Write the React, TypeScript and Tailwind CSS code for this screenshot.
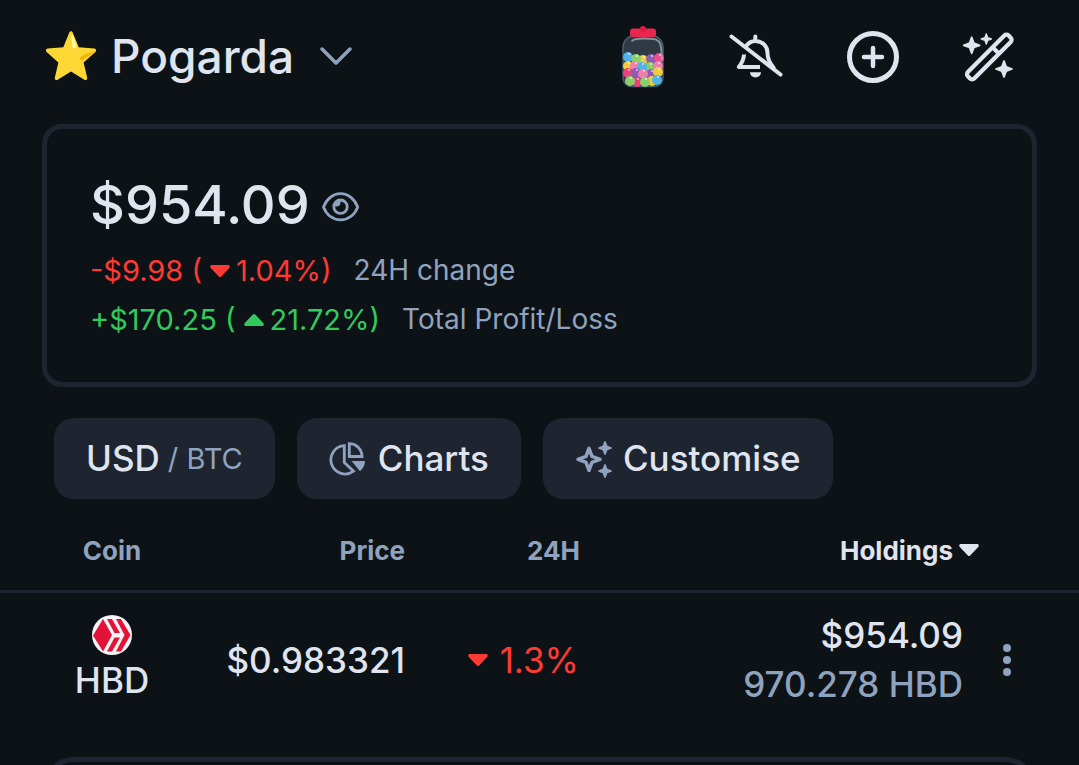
import type { ReactNode } from 'react';

type Holding = {
  symbol: string;
  price: string;
  change: string;
  value: string;
  amount: string;
};

const holdings: Holding[] = [
  {
    symbol: 'HBD',
    price: '$0.983321',
    change: '1.3%',
    value: '$954.09',
    amount: '970.278 HBD',
  },
];

// four-pointed star centred on (x, y)
const spark = (x: number, y: number, r: number) => {
  const k = r * 0.27;
  return `M${x} ${y - r}L${x + k} ${y - k}L${x + r} ${y}L${x + k} ${y + k}L${x} ${y + r}L${x - k} ${y + k}L${x - r} ${y}L${x - k} ${y - k}Z`;
};

const Caret = ({ up = false }: { up?: boolean }) => (
  <svg width="20" height="12" viewBox="0 0 20 12" fill="currentColor" className="inline-block shrink-0">
    {up ? (
      <path d="M8.8.6.8 9C-.4 10.300.2 12 2 12h16c1.800 0 2.400-1.700 1.200-3l-8-8.400a1.700 1.700 0 0 0-2.400 0Z" />
    ) : (
      <path d="M8.800 11.400.8 3C-.4 1.700.2 0 2 0h16c1.800 0 2.400 1.700 1.200 3l-8 8.400a1.700 1.700 0 0 1-2.400 0Z" />
    )}
  </svg>
);

const StarIcon = () => (
  <svg width="52" height="50" viewBox="0 0 52 50">
    <path
      d="M24.300 1.500c.7-1.700 2.700-1.700 3.400 0l6 14.800 15.600 1.300c1.800.2 2.400 2.200 1.100 3.400L38.600 31.400l3.600 15.300c.4 1.800-1.300 2.900-2.800 2L26 40.600l-13.400 8.100c-1.500.9-3.200-.2-2.800-2l3.600-15.300L1.600 21C.3 19.800.9 17.800 2.700 17.600l15.600-1.300Z"
      fill="#fdd835"
    />
    <path d="M27.200 4.500c.8 0 1.200.8 1.500 1.700l2.600 9.200c.5 2-2.700 3.400-3.600 1.100L26.300 6.400c-.3-1 .1-1.900.9-1.900Z" fill="#fff8a8" />
    <path d="M50 20.500 37.500 29.300c-2 .8-3.600-1.700-2-3.300 2.500-2.300 7-4 14.500-5.500Z" fill="#f4b400" />
  </svg>
);

const balls: [number, number, string][] = [
  [6, 31, '#4fb3e8'], [21, 34, '#f3cb3e'], [14, 33, '#8bcf6a'], [29, 33, '#8e5bb5'], [37, 32, '#ec4d8f'],
  [6, 40, '#f3cb3e'], [13, 40, '#ef7fb1'], [28, 41, '#8bcf6a'], [36, 40, '#ef7fb1'], [20, 41, '#4fb3e8'],
  [6, 47, '#ec407f'], [14, 47, '#8e5bb5'], [29, 48, '#8e5bb5'], [21, 48, '#ef7fb1'], [36, 46, '#f3cb3e'],
  [15, 56, '#ec407f'], [30, 55, '#f3cb3e'], [8, 55, '#8bcf6a'], [23, 56, '#8bcf6a'], [35, 54, '#4fb3e8'],
];

const JarIcon = () => (
  <svg width="44" height="62" viewBox="0 0 44 62">
    <path d="M10 10h24c5 2 8 6 8 12v29c0 6-4 9.500-9 9.500H11c-5 0-9-3.500-9-9.500V22c0-6 3-10 8-12Z" fill="#303a44" stroke="#45606f" strokeWidth="1.500" />
    {balls.map(([x, y, color]) => (
      <g key={`${x}-${y}`}>
        <circle cx={x + 1} cy={y} r="5" fill={color} />
        <circle cx={x + 2} cy={y - 3} r="1" fill="#fff" opacity=".7" />
      </g>
    ))}
    <path d="M11 15c2-2.500 6-2.500 11-2.500 9 0 15 0 17 5s1.500 12 1.500 16" fill="none" stroke="#a7b0b8" strokeWidth="1.800" strokeLinecap="round" opacity=".75" />
    <rect x="9" y="2.500" width="26" height="8.500" rx="3" fill="#e8264f" />
    <circle cx="22" cy="3" r="3" fill="#d81e45" />
  </svg>
);

const BellOffIcon = () => (
  <svg width="56" height="48" viewBox="0 0 56 48" fill="none" stroke="currentColor" strokeWidth="4" strokeLinecap="round" strokeLinejoin="round">
    <path d="M3.500 3.500 52.500 41.500" />
    <path d="M27.300 3.500v3M18 13.500c2.500-4 6-5.500 9.300-5.500 7 0 12.200 5 12.200 12 0 6 2 10 6 14.500" />
    <path d="M16 21.500c-.2 5-2 8.500-5.200 12.500H32" strokeLinecap="butt" />
    <path d="M22 39.300h11c0 3-2.500 5.200-5.500 5.200S22 42.300 22 39.300Z" fill="currentColor" stroke="none" />
  </svg>
);

const PlusIcon = () => (
  <svg width="52" height="52" viewBox="0 0 52 52" fill="none" stroke="currentColor" strokeLinecap="round">
    <circle cx="26" cy="26" r="23.500" strokeWidth="5" />
    <path d="M26 17v18M17 26h18" strokeWidth="4.500" />
  </svg>
);

const WandIcon = () => (
  <svg width="52" height="50" viewBox="0 0 52 50">
    <g transform="rotate(-45 27.300 25)" fill="none" stroke="currentColor" strokeWidth="4.200">
      <rect x="-1.500" y="20.500" width="57.600" height="9" rx="3" />
      <path d="M36.500 20v10" />
    </g>
    <path d={spark(9.7, 13.3, 8)} fill="currentColor" stroke="currentColor" strokeWidth="1.800" strokeLinejoin="round" />
    <path d={spark(24.3, 7, 5)} fill="currentColor" stroke="currentColor" strokeWidth="1.500" strokeLinejoin="round" />
    <path d={spark(42, 37, 8)} fill="currentColor" stroke="currentColor" strokeWidth="1.800" strokeLinejoin="round" />
  </svg>
);

const EyeIcon = () => (
  <svg width="38" height="30" viewBox="0 0 38 30" fill="none" stroke="currentColor" strokeWidth="2.800">
    <path d="M1.500 15C4.500 7 11 1.700 18.600 1.700S32.700 7 35.700 15c-3 8-9.500 12.800-17.100 12.800S4.500 23 1.500 15Z" strokeLinejoin="round" />
    <circle cx="18.500" cy="14.700" r="6.700" />
    <path d="M18.500 8v2.500c0 2.500-1.500 4-4 4H12c0-4 2.500-6.500 6.500-6.500Z" fill="currentColor" stroke="none" />
  </svg>
);

const PieIcon = () => (
  <svg width="37" height="36" viewBox="0 0 37 36" fill="none" stroke="currentColor" strokeWidth="2.800">
    <path d="M15.300 4.600A14.200 14.200 0 1 0 24.500 30.200L15.300 21.500Z" />
    <path d="M20.300 2.700V15.500H33A12.700 12.700 0 0 0 20.300 2.700Z" />
    <path d="M22.500 20H36c0 4-1.800 7.500-5 10.200Z" fill="currentColor" stroke="none" />
  </svg>
);

const SparklesIcon = () => (
  <svg width="40" height="40" viewBox="0 0 40 40" fill="currentColor" stroke="currentColor" strokeLinejoin="round">
    <path d={spark(14, 20.3, 11)} fill="none" strokeWidth="3.500" />
    <path d={spark(30, 9, 6)} strokeWidth="1.800" />
    <path d={spark(30, 32, 6)} strokeWidth="1.800" />
  </svg>
);

const HiveIcon = () => (
  <svg width="40" height="40" viewBox="0 0 40 40">
    <circle cx="20" cy="20" r="20" fill="#f7f3f7" />
    <g fill="#e31337">
      <path d="M11 4 20 20 11 36.500 1 20.500Z" />
      <path d="M15 4h5l8 14h-5.500Z" />
      <path d="M24 4h5L38.500 20 29 36.500h-5L32.500 20Z" />
      <path d="M22.500 22.500H28L20 36.500h-5Z" />
    </g>
  </svg>
);

const IconButton = ({ label, children }: { label: string; children: ReactNode }) => (
  <button type="button" aria-label={label} className="flex items-center justify-center">
    {children}
  </button>
);

const Header = () => (
  <header className="flex h-[112px] items-center justify-between pl-[45px] pr-[65px]">
    <button type="button" className="flex items-center">
      <StarIcon />
      <span className="ml-3.5 text-[46px] leading-[56px] font-medium">Pogarda</span>
      <svg width="34" height="20" viewBox="0 0 34 20" fill="none" className="ml-[25px] text-[#8fa3bf]">
        <path d="M3 3 17 17 31 3" stroke="currentColor" strokeWidth="3.500" strokeLinecap="round" strokeLinejoin="round" />
      </svg>
    </button>
    <div className="flex items-center gap-[63px] pt-0.5">
      <IconButton label="Candy jar">
        <JarIcon />
      </IconButton>
      <IconButton label="Alerts off">
        <BellOffIcon />
      </IconButton>
      <IconButton label="Add">
        <PlusIcon />
      </IconButton>
      <IconButton label="Magic">
        <WandIcon />
      </IconButton>
    </div>
  </header>
);

const Change = ({ amount, percent, up = false }: { amount: string; percent: string; up?: boolean }) => (
  <span className={`flex items-center text-[29px] ${up ? 'text-[#32ca5b]' : 'text-[#ff3a33]'}`}>
    {amount} (
    <span className="mr-1.5 ml-2 flex">
      <Caret up={up} />
    </span>
    {percent})
  </span>
);

const Summary = () => (
  <section className="mx-[42px] mt-3 rounded-[20px] border-[5px] border-[#1e2530] px-[43px] pt-10 pb-[38px]">
    <div className="flex items-center gap-3">
      <span className="text-[54px] leading-[72px] font-medium">$954.09</span>
      <button type="button" aria-label="Hide balance" className="pt-1 text-[#8fa3bf]">
        <EyeIcon />
      </button>
    </div>
    <div className="flex items-center gap-[22px] pt-[5px] text-[28px] leading-[49px] text-[#8fa3bf]">
      <Change amount="-$9.98" percent="1.04%" />
      24H change
    </div>
    <div className="flex items-center gap-[22px] text-[28px] leading-[49px] text-[#8fa3bf]">
      <Change amount="+$170.25" percent="21.72%" up />
      Total Profit/Loss
    </div>
  </section>
);

const actionClass =
  'flex h-[81px] items-center rounded-[20px] bg-[#1e2530] px-8 text-[35px] font-medium';

const Actions = () => (
  <div className="flex gap-[22px] px-[54px] pt-[31px]">
    <button type="button" className={actionClass}>
      USD
      <span className="ml-2 text-[29px] font-normal text-[#8fa3bf]">/ BTC</span>
    </button>
    <button type="button" className={actionClass}>
      <span className="mr-3 text-[#8fa3bf]"><PieIcon /></span>
      Charts
    </button>
    <button type="button" className={actionClass}>
      <span className="mr-2 text-[#8fa3bf]"><SparklesIcon /></span>
      Customise
    </button>
  </div>
);

const HoldingsTable = () => (
  <table className="w-full table-fixed">
    <thead>
      <tr className="h-[92px] border-b-[3px] border-[#1e2530] text-[26px] text-[#8fa3bf]">
        <th scope="col" className="w-[224px] pt-3">Coin</th>
        <th scope="col" className="w-[181px] pt-3 text-right">Price</th>
        <th scope="col" className="w-[175px] pt-3 text-right">24H</th>
        <th scope="col" className="pt-3 text-[#dfe4ee]">
          <button type="button" className="ml-auto flex items-center gap-1.5 font-bold">
            Holdings
            <Caret />
          </button>
        </th>
        <th scope="col" aria-label="Options" className="w-[100px]" />
      </tr>
    </thead>
    <tbody>
      {holdings.map((coin) => (
        <tr key={coin.symbol} className="h-[136px] text-[35px] font-medium">
          <td>
            <div className="flex flex-col items-center">
              <HiveIcon />
              <span className="leading-[50px]">{coin.symbol}</span>
            </div>
          </td>
          <td className="text-right">{coin.price}</td>
          <td className="pr-px font-normal text-[#ff3a33]">
            <div className="flex items-center justify-end gap-3">
              <Caret />
              {coin.change}
            </div>
          </td>
          <td className="pr-4 text-right leading-[49px]">
            <div>{coin.value}</div>
            <div className="text-[#8fa3bf]">{coin.amount}</div>
          </td>
          <td className="pl-6">
            <button type="button" aria-label={`${coin.symbol} options`} className="flex text-[#8fa3bf]">
              <svg width="8" height="32" viewBox="0 0 8 32" fill="currentColor">
                <circle cx="4" cy="4" r="4" />
                <circle cx="4" cy="16" r="4" />
                <circle cx="4" cy="28" r="4" />
              </svg>
            </button>
          </td>
        </tr>
      ))}
    </tbody>
  </table>
);

const App = () => {
  return (
    <main className="h-screen overflow-hidden bg-[#0d1217] font-['Inter',sans-serif] text-[#dfe4ee]">
      <Header />
      <Summary />
      <Actions />
      <HoldingsTable />
      <div className="mx-[42px] mt-[30px] h-32 rounded-[32px] border-[5px] border-[#1e2530]" />
    </main>
  );
};

export default App;
